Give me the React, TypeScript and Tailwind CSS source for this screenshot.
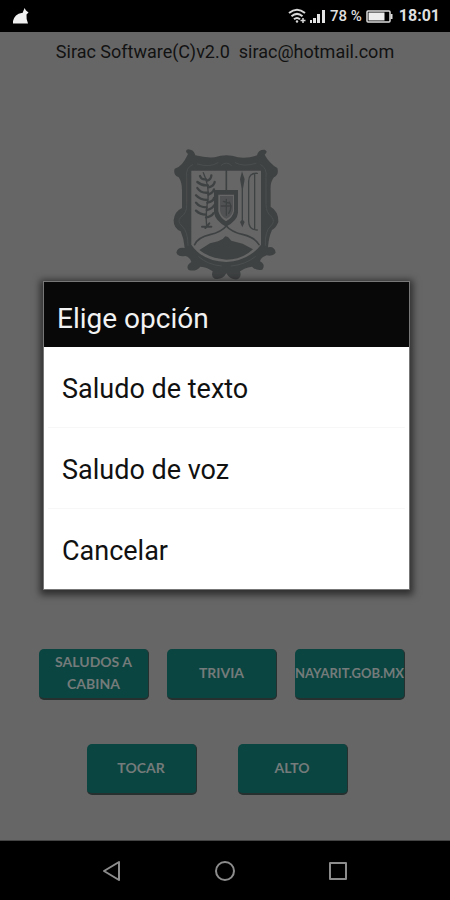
import type { ReactNode } from "react";

const options = ["Saludo de texto", "Saludo de voz", "Cancelar"];

function StatusBar() {
  return (
    <header className="flex h-8 shrink-0 items-center justify-between bg-black pr-[10px] pl-3 text-[#dedede]">
      <svg width="18" height="18" viewBox="0 0 18 18" fill="#f0f0f0" aria-hidden="true">
        <path d="M1 16.500 V14 Q1.500 11 4 8.500 Q7 5.500 10.500 6 L12 2.500 L12.500 1 L14 3.500 L16.500 5.500 L14.500 7.500 Q14 11 16 16.500 Z" />
      </svg>
      <div className="flex items-center">
        <svg width="18" height="16" viewBox="0 0 18 16" fill="none" stroke="#d8d8d8" strokeWidth="2" aria-hidden="true">
          <path d="M1 5 Q9 -1.500 17 5" />
          <path d="M3.500 8.200 Q9 3.500 14.500 8.200" />
          <path d="M6 11.300 Q9 8.600 12 11.300" />
          <circle cx="9" cy="13.500" r="1.200" fill="#d8d8d8" stroke="none" />
          <path d="M12.500 12.500 h5 M15 10 v5" strokeWidth="1.500" />
        </svg>
        <svg className="ml-1" width="16" height="14" viewBox="0 0 16 14" fill="#e4e4e4" aria-hidden="true">
          <rect x="0" y="11" width="2" height="3" />
          <rect x="3" y="9" width="3" height="5" />
          <rect x="7" y="5" width="3" height="9" />
          <rect x="12" y="1" width="3" height="13" />
        </svg>
        <span className="ml-1 text-[15px] leading-5 font-medium whitespace-pre">78 %</span>
        <svg className="ml-1" width="27" height="13" viewBox="0 0 27 13" aria-hidden="true">
          <rect x="1" y="1" width="23" height="11" rx="1" fill="none" stroke="#dedede" strokeWidth="1.500" />
          <rect x="2.500" y="2.500" width="16" height="8" fill="#ededed" />
          <rect x="24.500" y="4" width="2" height="5" fill="#dedede" />
        </svg>
        <span className="ml-[6px] text-base leading-5 font-bold">18:01</span>
      </div>
    </header>
  );
}

function Crest() {
  return (
    <svg className="mt-[76px]" width="130" height="145" viewBox="0 0 390 435" aria-label="Escudo de Nayarit" role="img">
      <g fill="#3f4243">
        <path
          fillRule="evenodd"
          d="M84 42 Q72 32 84 28 Q102 28 106 46 Q136 54 164 52 Q182 46 199 46 Q216 46 234 52 Q264 56 291 46 Q294 28 314 29 Q326 34 314 44 Q328 70 352 84 Q358 104 342 112 Q330 126 332 152 L332 200 Q356 214 355 246 Q348 264 336 270 Q326 292 324 322 Q344 318 347 338 Q338 350 320 346 Q302 352 300 364 Q318 374 307 389 Q290 394 276 380 Q252 384 240 394 Q246 412 232 418 Q210 420 199 400 Q188 420 164 416 Q152 410 158 394 Q144 382 121 380 Q108 396 86 390 Q76 378 94 366 Q90 352 76 348 Q54 352 49 338 Q52 320 74 324 Q72 296 62 274 Q40 264 41 240 Q44 214 66 204 L66 152 Q66 126 56 112 Q38 104 44 86 Q66 82 84 42 Z M94 92 L94 314 Q128 364 199 366 Q266 362 303 314 L303 92 Z"
        />
        <path d="M118 330 L150 310 L174 304 L188 297 L196 289 L204 291 L214 302 L248 311 L279 328 Q248 358 199 359 Q146 354 118 330 Z" />
        <path fillRule="evenodd" d="M162 150 H234 V218 Q232 242 198 260 Q166 242 162 218 Z M175 164 V214 Q180 234 198 244 Q218 234 222 214 V164 Z" />
        <path d="M246 94 L254 118 L249 146 V240 L254 246 L247 262 L240 246 L245 240 V146 L240 118 Z" />
        <path d="M180 168 H219 V212 Q214 230 199 236 Q184 230 180 212 Z" opacity="0.55" />
      </g>
      <g fill="none" stroke="#3f4243" strokeWidth="5" strokeLinecap="round">
        <path d="M199 50 V156" />
        <path d="M184 198 H214 M199 178 V226 M190 184 L210 190 M208 186 Q218 202 206 220" strokeWidth="4" />
        <path d="M104 314 Q114 292 150 284 Q184 276 199 258 Q214 276 250 284 Q284 292 297 314" />
        <path d="M292 100 Q266 98 266 124 V244 Q266 270 292 270 M284 104 V266" strokeWidth="4" />
        <path d="M140 260 Q136 220 144 178 Q148 136 130 98" strokeWidth="4" />
        <path d="M126 260 H154 M148 250 L136 264" strokeWidth="6" />
      </g>
      <g fill="none" stroke="#3f4243" strokeWidth="7" strokeLinecap="round">
        <path d="M138 118 Q124 120 120 108 M144 136 Q126 138 112 126 M144 158 Q122 160 112 144 M142 180 Q120 180 108 166 M140 202 Q118 202 108 188 M138 224 Q120 224 108 212" />
        <path d="M142 122 Q154 118 154 106 M146 142 Q162 138 164 126 M145 164 Q160 158 162 148 M142 188 Q160 184 162 174 M140 210 Q158 206 162 196 M138 232 Q154 230 160 220" />
      </g>
      <g fill="none" stroke="#4b4e4e" strokeWidth="3" strokeLinecap="round">
        <path d="M98 74 Q76 82 80 112 V194 Q82 218 62 232 Q50 244 66 258 Q84 274 84 316 M302 74 Q322 84 318 112 V194 Q318 218 336 232 Q346 246 332 258 Q314 274 316 316" />
        <path d="M112 72 Q150 84 174 68 M226 68 Q250 82 288 70 M184 76 Q199 62 214 76 M116 350 Q142 374 184 378 M214 378 Q256 374 286 350" />
      </g>
    </svg>
  );
}

function AppButton({ children }: { children: ReactNode }) {
  return (
    <button className="flex h-[51px] w-[110px] shrink-0 items-center justify-center rounded-[5px] border-r border-b-2 border-[#25302f] bg-[#0b4541] pb-[2px] text-center font-['Lato',sans-serif] text-sm leading-[22px] font-bold whitespace-nowrap text-[#747b7a]">
      {children}
    </button>
  );
}

function OptionDialog() {
  return (
    <div className="absolute inset-0 flex items-center pr-10 pb-px pl-[43px]">
      <section
        role="dialog"
        aria-labelledby="dialog-title"
        className="w-full border border-[#777] bg-white shadow-[0_2px_7px_3px_rgba(0,0,0,0.55)]"
      >
        <h1 id="dialog-title" className="flex h-[65px] items-center bg-[#080808] px-[13px] pt-2 text-[28px] leading-8 text-[#f2f2f2]">
          Elige opción
        </h1>
        <ul className="px-1">
          {options.map((option) => (
            <li key={option} className="border-b border-[#f7f7f7] last:border-b-0">
              <button className="flex h-20 w-full items-center px-[14px] pt-1 text-left text-[27px] leading-8 text-[#111]">
                {option}
              </button>
            </li>
          ))}
        </ul>
      </section>
    </div>
  );
}

function NavigationBar() {
  return (
    <nav className="grid h-[59px] shrink-0 grid-cols-[1fr_113px_113px_113px_1fr] items-center justify-items-center bg-black" aria-label="Sistema">
      <button className="col-start-2" aria-label="Atrás">
        <svg width="22" height="22" viewBox="0 0 22 22" fill="none" stroke="#8c8c8c" strokeWidth="2" strokeLinejoin="round">
          <path d="M18 2 L3 11 L18 20 Z" />
        </svg>
      </button>
      <button aria-label="Inicio">
        <svg width="22" height="22" viewBox="0 0 22 22" fill="none" stroke="#8c8c8c" strokeWidth="2">
          <circle cx="11" cy="11" r="9" />
        </svg>
      </button>
      <button aria-label="Recientes">
        <svg width="22" height="22" viewBox="0 0 22 22" fill="none" stroke="#8c8c8c" strokeWidth="2" strokeLinejoin="round">
          <rect x="3" y="3" width="16" height="16" />
        </svg>
      </button>
    </nav>
  );
}

export default function App() {
  return (
    <div className="flex min-h-screen flex-col bg-[#666] font-['Roboto',sans-serif]">
      <StatusBar />
      <main className="relative flex flex-1 flex-col items-center border-b border-[#444] pb-[45px]">
        <p className="pt-2 text-lg leading-6 whitespace-pre text-[#121212]">Sirac Software(C)v2.0  sirac@hotmail.com</p>
        <Crest />
        <div className="mt-auto flex w-full justify-center gap-[18px] pr-[6px]">
          <AppButton>
            SALUDOS A
            <br />
            CABINA
          </AppButton>
          <AppButton>TRIVIA</AppButton>
          <AppButton>
            <span className="text-[13px]">NAYARIT.GOB.MX</span>
          </AppButton>
        </div>
        <div className="mt-11 flex w-full justify-center gap-[41px] pr-4">
          <AppButton>TOCAR</AppButton>
          <AppButton>ALTO</AppButton>
        </div>
        <OptionDialog />
      </main>
      <NavigationBar />
    </div>
  );
}
